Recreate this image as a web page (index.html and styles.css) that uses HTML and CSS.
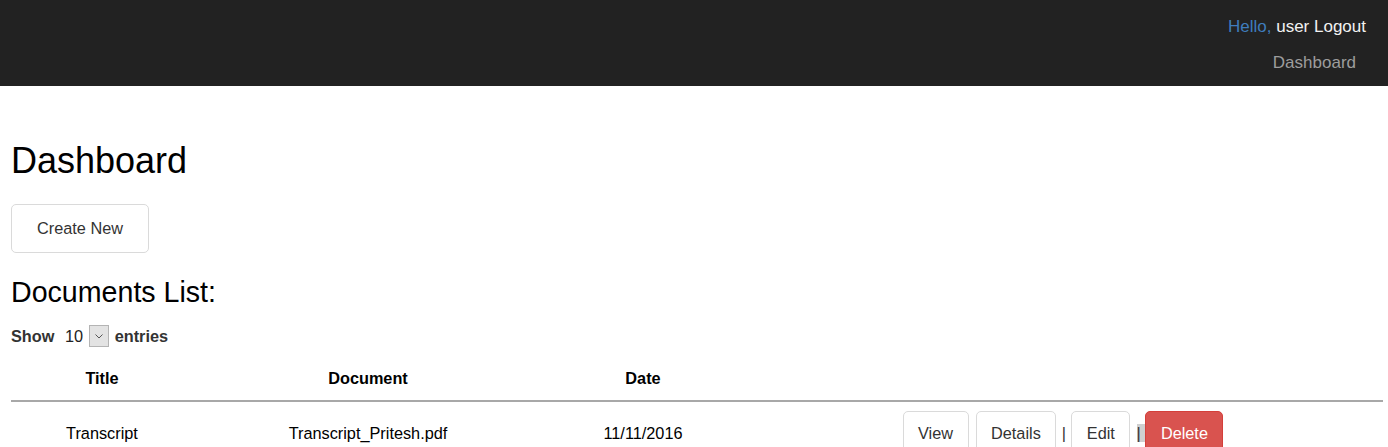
FILE: index.html
```html
<!DOCTYPE html>
<html lang="en">
<head>
<meta charset="utf-8">
<title>Dashboard</title>
<link rel="stylesheet" href="styles.css">
</head>
<body>
<header class="navbar">
  <div class="nav-top"><span class="hello">Hello,</span> <span class="user">user</span> <a class="logout" href="#">Logout</a></div>
  <a class="nav-link" href="#">Dashboard</a>
</header>
<main class="content">
  <h1 class="page-title">Dashboard</h1>
  <a class="btn btn-create" href="#">Create New</a>
  <h2 class="list-title">Documents List:</h2>
  <div class="show">
    <b class="show-label">Show</b>
    <span class="select-val">10</span>
    <span class="select-arrow"><svg width="8" height="5" viewBox="0 0 8 5"><path d="M0.5 0.5 L4 4 L7.5 0.5" fill="none" stroke="#555" stroke-width="1"/></svg></span>
    <b class="show-label">entries</b>
  </div>
  <table class="docs">
    <colgroup>
      <col class="c1"><col class="c2"><col class="c3"><col class="c4">
    </colgroup>
    <thead>
      <tr><th>Title</th><th>Document</th><th>Date</th><th></th></tr>
    </thead>
    <tbody>
      <tr>
        <td>Transcript</td>
        <td>Transcript_Pritesh.pdf</td>
        <td>11/11/2016</td>
        <td>
          <div class="actions">
            <a class="btn btn-sm" href="#">View</a>
            <a class="btn btn-sm btn-gap" href="#">Details</a>
            <span class="sep">|</span>
            <a class="btn btn-sm" href="#">Edit</a>
            <span class="sep sep2"><span class="hl">|</span></span>
            <a class="btn btn-sm btn-danger" href="#">Delete</a>
          </div>
        </td>
      </tr>
    </tbody>
  </table>
</main>
</body>
</html>
```

FILE: styles.css
```css
* { box-sizing: border-box; }
html, body { margin: 0; padding: 0; background: #fff; }
body {
  font-family: "Liberation Sans", Arial, sans-serif;
  font-size: 16.3px;
  color: #000;
}
a { text-decoration: none; }

.navbar {
  height: 86px;
  background: #222;
  display: flex;
  flex-direction: column;
  align-items: flex-end;
  padding: 17px 22px 0 0;
  font-size: 17px;
  line-height: 20px;
}
.nav-top { color: #eee; white-space: nowrap; }
.hello { color: #3f7dbd; }
.user, .logout { color: #f2f2f2; }
.nav-link {
  color: #9d9d9d;
  margin-top: 16px;
  margin-right: 10px;
}

.content {
  padding: 55px 5px 0 11px;
}
.page-title {
  margin: 0;
  font-size: 36px;
  line-height: 40px;
  font-weight: normal;
}
.btn {
  display: inline-block;
  border: 1px solid #dadada;
  border-radius: 5px;
  background: #fff;
  color: #333;
  font-size: 16.3px;
  white-space: nowrap;
}
.btn-create {
  margin-top: 23px;
  padding: 14px 25px 14px 25px;
  line-height: 19px;
}
.list-title {
  margin: 23px 0 0 0;
  font-size: 28.6px;
  line-height: 32px;
  font-weight: normal;
}
.show {
  margin-top: 17px;
  height: 22px;
  display: flex;
  align-items: center;
  color: #333;
}
.show-label { font-weight: bold; }
.select-val {
  margin-left: 10.6px;
  margin-right: 6px;
  color: #222;
}
.select-arrow {
  width: 20px;
  height: 22px;
  background: #e3e3e3;
  border: 1px solid #b4b4b4;
  display: flex;
  align-items: center;
  justify-content: center;
  margin-right: 5.5px;
}

.docs {
  margin-top: 13px;
  width: 1372px;
  table-layout: fixed;
  border-collapse: separate;
  border-spacing: 0;
}
.c1 { width: 182px; }
.c2 { width: 350px; }
.c3 { width: 200px; }
.c4 { width: 640px; }
.docs th {
  padding: 8px 8px 12px 8px;
  line-height: 20px;
  font-weight: bold;
  text-align: center;
  border-bottom: 2px solid #a8a8a8;
}
.docs td {
  padding: 9px 8px 8px 8px;
  text-align: center;
  vertical-align: middle;
  line-height: 22px;
}
.actions {
  display: flex;
  justify-content: center;
  align-items: center;
}
.btn-sm {
  padding: 10px 14.5px;
  line-height: 22px;
}
.btn-gap { margin-left: 7px; }
.sep {
  width: 15px;
  text-align: center;
  color: #333;
  line-height: 18px;
}
.sep2 {
  display: flex;
  justify-content: flex-end;
}
.hl {
  width: 8.5px;
  height: 18px;
  background: #cfcfcf;
  text-align: left;
  text-indent: -0.5px;
}
.btn-danger {
  background: #d9534f;
  border-color: #d43f3a;
  color: #fff;
}
```
